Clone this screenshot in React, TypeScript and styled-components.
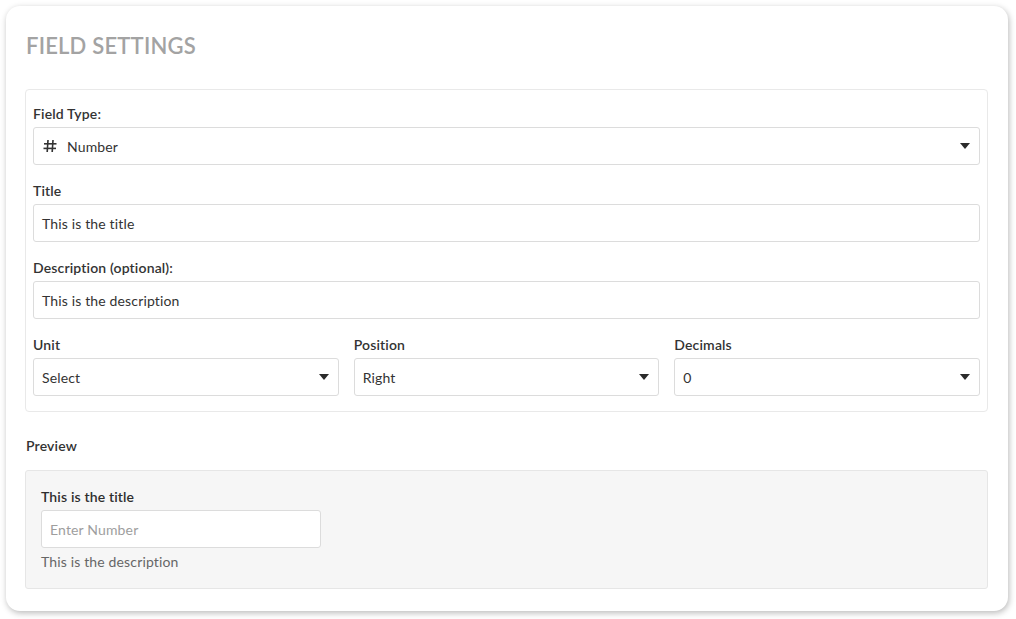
import React, { FC } from 'react';
import styled, { createGlobalStyle } from 'styled-components';

const GlobalStyle = createGlobalStyle`
  html, body {
    margin: 0;
    padding: 0;
    background: #ffffff;
    font-family: Lato, "Open Sans", Arial, sans-serif;
    color: #333333;
    letter-spacing: 0.15px;
  }
`;

const Page = styled.div`
  width: 1016px;
  height: 619px;
  box-sizing: border-box;
  padding: 6px 8px 8px 6px;
`;

const Card = styled.div`
  box-sizing: border-box;
  height: 605px;
  background: #ffffff;
  border-radius: 14px;
  box-shadow: 1px 2px 6px rgba(0, 0, 0, 0.28);
  padding: 27px 20px 0 19px;
`;

const Heading = styled.h1`
  margin: 0 0 30px 1px;
  font-size: 22px;
  line-height: 26px;
  font-weight: 600;
  color: #a3a3a3;
  letter-spacing: 0.2px;
`;

const SettingsBox = styled.div`
  border: 1px solid #e9e9e9;
  border-radius: 4px;
  padding: 15px 7px 15px 7px;
  display: flex;
  flex-direction: column;
  gap: 17px;
`;

const Group = styled.div`
  display: flex;
  flex-direction: column;
  gap: 4px;
`;

const Row = styled.div`
  display: grid;
  grid-template-columns: 1fr 1fr 1fr;
  gap: 15px;
`;

const Label = styled.label`
  font-size: 14px;
  line-height: 18px;
  font-weight: 600;
  color: #333333;
`;

const Field = styled.div<{ $width?: number }>`
  box-sizing: border-box;
  height: 38px;
  width: ${({ $width }) => ($width ? `${$width}px` : '100%')};
  border: 1px solid #dcdcdc;
  border-radius: 3px;
  background: #ffffff;
  display: flex;
  align-items: center;
  padding: 0 8px 0 8px;
  font-size: 14px;
  color: #333333;
`;

const FieldText = styled.span<{ $placeholder?: boolean }>`
  flex: 1;
  color: ${({ $placeholder }) => ($placeholder ? '#9e9e9e' : '#333333')};
`;

const HashIcon = styled.svg`
  width: 14px;
  height: 14px;
  margin: 0 10px 0 1px;
  flex-shrink: 0;
`;

const Caret = styled.span`
  width: 0;
  height: 0;
  border-left: 5px solid transparent;
  border-right: 5px solid transparent;
  border-top: 6px solid #2b2b2b;
  margin-right: 1px;
`;

const SectionLabel = styled.div`
  margin: 25px 0 15px 1px;
  font-size: 14px;
  line-height: 18px;
  font-weight: 600;
  color: #333333;
`;

const PreviewBox = styled.div`
  background: #f6f6f6;
  border: 1px solid #e6e6e6;
  border-radius: 3px;
  padding: 17px 15px 17px 15px;
  display: flex;
  flex-direction: column;
  gap: 4px;
`;

const PreviewTitle = styled.div`
  font-size: 14px;
  line-height: 18px;
  font-weight: 600;
  color: #2e2e2e;
`;

const Hint = styled.div`
  font-size: 14px;
  line-height: 18px;
  color: #666666;
  margin-top: 1px;
`;

const Hash: FC = () => (
  <HashIcon viewBox="0 0 14 14">
    <g stroke="#333333" strokeWidth="1.6" fill="none">
      <line x1="5" y1="1" x2="4.2" y2="13" />
      <line x1="10" y1="1" x2="9.2" y2="13" />
      <line x1="1" y1="4.8" x2="13.5" y2="4.8" />
      <line x1="0.5" y1="9.4" x2="13" y2="9.4" />
    </g>
  </HashIcon>
);

type SelectProps = { value: string; icon?: boolean };

const Select: FC<SelectProps> = ({ value, icon }) => (
  <Field>
    {icon && <Hash />}
    <FieldText>{value}</FieldText>
    <Caret />
  </Field>
);

const App: FC = () => (
  <Page>
    <GlobalStyle />
    <Card>
      <Heading>FIELD SETTINGS</Heading>
      <SettingsBox>
        <Group>
          <Label>Field Type:</Label>
          <Select value="Number" icon />
        </Group>
        <Group>
          <Label>Title</Label>
          <Field>
            <FieldText>This is the title</FieldText>
          </Field>
        </Group>
        <Group>
          <Label>Description (optional):</Label>
          <Field>
            <FieldText>This is the description</FieldText>
          </Field>
        </Group>
        <Row>
          <Group>
            <Label>Unit</Label>
            <Select value="Select" />
          </Group>
          <Group>
            <Label>Position</Label>
            <Select value="Right" />
          </Group>
          <Group>
            <Label>Decimals</Label>
            <Select value="0" />
          </Group>
        </Row>
      </SettingsBox>
      <SectionLabel>Preview</SectionLabel>
      <PreviewBox>
        <PreviewTitle>This is the title</PreviewTitle>
        <Field $width={280}>
          <FieldText $placeholder>Enter Number</FieldText>
        </Field>
        <Hint>This is the description</Hint>
      </PreviewBox>
    </Card>
  </Page>
);

export default App;
